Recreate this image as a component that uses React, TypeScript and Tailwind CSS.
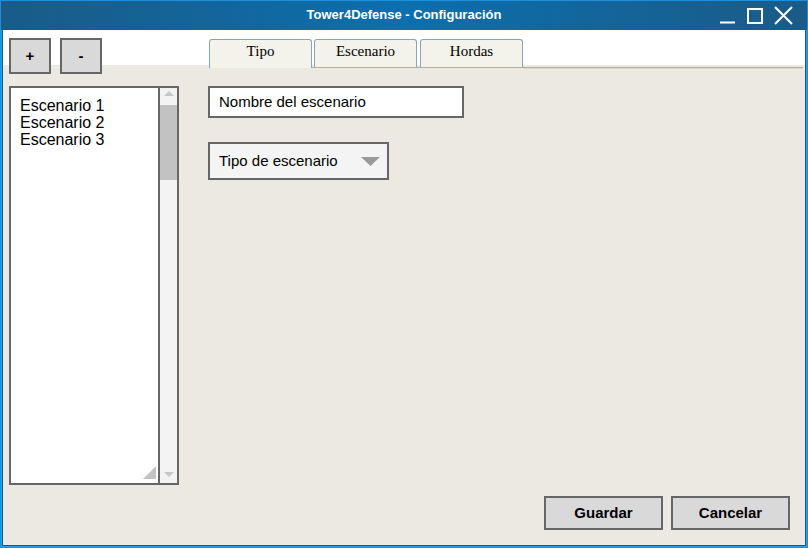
export default function App() {
  return (
    <div className="w-[808px] h-[548px] border border-[#1d8fdc] flex flex-col font-['Liberation_Sans',Arial,sans-serif] overflow-hidden text-black">
      {/* title bar */}
      <div className="h-[29px] shrink-0 grid grid-cols-[1fr_auto_1fr] items-center bg-[linear-gradient(to_right,#1a5b87,#0c6fae_50%,#1a5b87)]">
        <div />
        <div className="text-white font-bold text-[13px] leading-none pb-[2px]">Tower4Defense - Configuración</div>
        <div className="flex justify-end h-full">
          <svg width="96" height="29" viewBox="0 0 96 29" fill="none" stroke="white" strokeWidth="2">
            <path d="M9 21.5H24" />
            <rect x="37" y="8" width="14" height="14" />
            <path d="M64 6L81 23M81 6L64 23" />
          </svg>
        </div>
      </div>
      {/* body */}
      <div className="flex-1 flex flex-col border-x border-b border-[#22a0ee]">
        <div className="flex-1 flex flex-col border-x border-b border-[#0f5a8e] bg-[linear-gradient(to_bottom,#ffffff_35px,#ece9e3_35px)]">
          <div className="h-[455px] flex">
            {/* left column */}
            <div className="w-[176px] pl-[6px] flex flex-col">
              <div className="pt-[8px] flex gap-[9px]">
                <button className="w-[42px] h-[36px] border-2 border-[#666666] bg-[#d9d9d9] font-bold text-[15px] flex items-center justify-center">+</button>
                <button className="w-[42px] h-[36px] border-2 border-[#666666] bg-[#d9d9d9] font-bold text-[15px] flex items-center justify-center">-</button>
              </div>
              <div className="mt-[12px] flex-1 w-[170px] border-2 border-[#666666] bg-white flex">
                <div className="flex-1 relative pl-[9px] pt-[9px] text-[16px] leading-[17px]">
                  <div>Escenario 1</div>
                  <div>Escenario 2</div>
                  <div>Escenario 3</div>
                  <svg className="absolute right-[2px] bottom-[4px]" width="13" height="13" viewBox="0 0 13 13">
                    <path d="M13 0V13H0Z" fill="#c3c3c3" />
                  </svg>
                </div>
                <div className="w-[19px] border-l-2 border-[#666666] bg-[#f3f3f3] flex flex-col">
                  <div className="h-[17px] flex justify-center pt-[3px]">
                    <svg width="10" height="5" viewBox="0 0 10 5"><path d="M0 5L5 0L10 5Z" fill="#c8c8c8" /></svg>
                  </div>
                  <div className="h-[75px] bg-[#c2c2c2]" />
                  <div className="flex-1" />
                  <div className="h-[17px] flex justify-center pt-[6px]">
                    <svg width="10" height="5" viewBox="0 0 10 5"><path d="M0 0L5 5L10 0Z" fill="#c8c8c8" /></svg>
                  </div>
                </div>
              </div>
            </div>
            {/* right column */}
            <div className="flex-1 pl-[29px] pr-[2px] flex flex-col">
              <div className="pt-[9px] flex items-start h-[38px]">
                <div className="ml-[1px] w-[103px] h-[29px] border border-b-0 border-[#8da3b9] rounded-t-[3px] bg-[#f3f2eb] text-center pt-[3px] font-['Liberation_Serif',serif] text-[15px] leading-[17px]">Tipo</div>
                <div className="self-start h-[29px] flex flex-col justify-end">
                  <div className="w-[2px] h-[1px] bg-[#b3af9a]" />
                </div>
                <div className="w-[103px] h-[29px] border border-[#8da3b9] border-b-[#b3af9a] rounded-t-[3px] bg-[#f3f2eb] text-center pt-[3px] font-['Liberation_Serif',serif] text-[15px] leading-[17px]">Escenario</div>
                <div className="self-start h-[29px] flex flex-col justify-end">
                  <div className="w-[3px] h-[1px] bg-[#b3af9a]" />
                </div>
                <div className="w-[103px] h-[29px] border border-[#8da3b9] border-b-[#b3af9a] rounded-t-[3px] bg-[#f3f2eb] text-center pt-[3px] font-['Liberation_Serif',serif] text-[15px] leading-[17px]">Hordas</div>
                <div className="flex-1 self-start h-[30px] flex flex-col justify-end">
                  <div className="h-[1px] bg-[#b3af9a]" />
                  <div className="h-[1px] bg-[#dcd9cb]" />
                </div>
              </div>
              <div className="mt-[18px] w-[256px] h-[32px] border-2 border-[#666666] bg-white pl-[9px] flex items-center text-[15px]">Nombre del escenario</div>
              <div className="mt-[24px] w-[181px] h-[38px] border-2 border-[#666666] bg-[#f4f4f4] pl-[9px] pr-[7px] flex items-center justify-between text-[15px]">
                <span>Tipo de escenario</span>
                <svg width="19" height="9" viewBox="0 0 19 9"><path d="M0 0H19L9.5 9Z" fill="#9a9a9a" /></svg>
              </div>
            </div>
          </div>
          <div className="mt-[11px] pr-[15px] pb-[15px] flex justify-end gap-[8px]">
            <button className="w-[119px] h-[34px] border-2 border-[#666666] bg-[#d9d9d9] font-bold text-[15px] flex items-center justify-center">Guardar</button>
            <button className="w-[119px] h-[34px] border-2 border-[#666666] bg-[#d9d9d9] font-bold text-[15px] flex items-center justify-center">Cancelar</button>
          </div>
        </div>
      </div>
    </div>
  );
}
